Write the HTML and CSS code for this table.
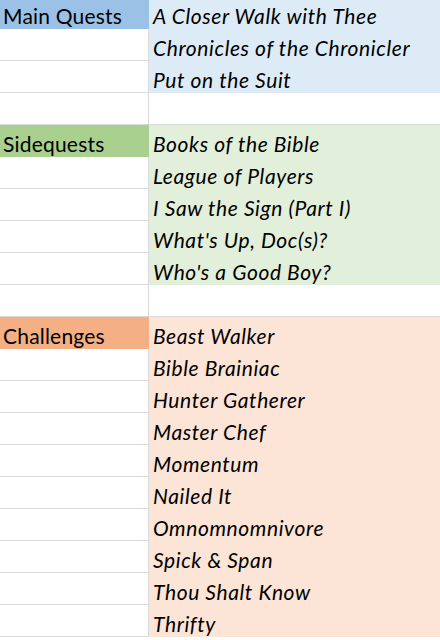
FILE: index.html
```html
<!DOCTYPE html>
<html>
<head>
<meta charset="utf-8">
<link rel="stylesheet" href="styles.css">
</head>
<body>
<div class="sheet">
  <div class="c a blue-h">Main Quests</div><div class="c b blue">A Closer Walk with Thee</div>
  <div class="c a"></div><div class="c b blue">Chronicles of the Chronicler</div>
  <div class="c a"></div><div class="c b blue">Put on the Suit</div>
  <div class="c a"></div><div class="c b"></div>
  <div class="c a green-h">Sidequests</div><div class="c b green">Books of the Bible</div>
  <div class="c a"></div><div class="c b green">League of Players</div>
  <div class="c a"></div><div class="c b green">I Saw the Sign (Part I)</div>
  <div class="c a"></div><div class="c b green">What's Up, Doc(s)?</div>
  <div class="c a"></div><div class="c b green">Who's a Good Boy?</div>
  <div class="c a"></div><div class="c b"></div>
  <div class="c a orange-h">Challenges</div><div class="c b orange">Beast Walker</div>
  <div class="c a"></div><div class="c b orange">Bible Brainiac</div>
  <div class="c a"></div><div class="c b orange">Hunter Gatherer</div>
  <div class="c a"></div><div class="c b orange">Master Chef</div>
  <div class="c a"></div><div class="c b orange">Momentum</div>
  <div class="c a"></div><div class="c b orange">Nailed It</div>
  <div class="c a"></div><div class="c b orange">Omnomnomnivore</div>
  <div class="c a"></div><div class="c b orange">Spick &amp; Span</div>
  <div class="c a"></div><div class="c b orange">Thou Shalt Know</div>
  <div class="c a"></div><div class="c b orange">Thrifty</div>
</div>
</body>
</html>
```

FILE: styles.css
```css
html, body { margin: 0; padding: 0; background: #fff; }
body { overflow: hidden; font-family: "Lato", "Open Sans", sans-serif; font-size: 21px; color: #000; }
.sheet { display: grid; grid-template-columns: 149px 1fr; margin-top: -3px; }
.c { height: 32px; box-sizing: border-box; border-bottom: 1px solid #dadada; padding: 5px 4px 0; display: flex; align-items: center; white-space: nowrap; overflow: hidden; }
.a { border-right: 1px solid #dadada; padding-left: 3px; letter-spacing: 0.2px; }
.b { font-style: italic; padding-left: 4px; letter-spacing: 0.6px; }
.blue-h { background: #9bc2e6; border-color: #9bc2e6; }
.blue { background: #ddebf7; border-color: #ddebf7; }
.green-h { background: #a9d08e; border-color: #a9d08e; }
.green { background: #e2efda; border-color: #e2efda; }
.orange-h { background: #f4b084; border-color: #f4b084; }
.orange { background: #fce4d6; border-color: #fce4d6; }
```
